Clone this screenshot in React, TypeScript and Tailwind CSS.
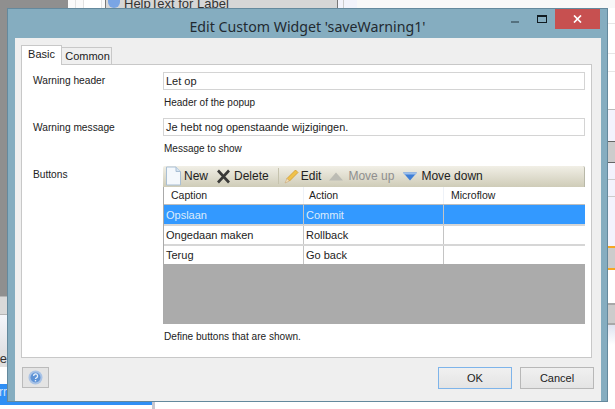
import React from "react";

const rows = [
  { caption: "Opslaan", action: "Commit", selected: true, last: false },
  { caption: "Ongedaan maken", action: "Rollback", selected: false, last: false },
  { caption: "Terug", action: "Go back", selected: false, last: true },
];

function NewIcon() {
  return (
    <svg width="17" height="20" viewBox="0 0 17 20">
      <path d="M1.5 1h9.5l4.5 4.5V19h-14z" fill="#f4f8fc" stroke="#a9bfd4" />
      <path d="M11 1v4.5h4.5" fill="#d5e3f0" stroke="#a9bfd4" />
    </svg>
  );
}

function DeleteIcon() {
  return (
    <svg width="15" height="15" viewBox="0 0 15 15">
      <path d="M2 1.5l11 12M13 1.5l-11 12" stroke="#3a3a38" strokeWidth="2.6" />
    </svg>
  );
}

function EditIcon() {
  return (
    <svg width="17" height="17" viewBox="0 0 17 17">
      <path d="M4 10.5L12.5 2l2.5 2.5L6.5 13z" fill="#f0c24a" stroke="#d19a30" strokeWidth="0.8" />
      <path d="M4 10.5L6.5 13 2 15z" fill="#f3dfb8" stroke="#c9a878" strokeWidth="0.6" />
    </svg>
  );
}

function Triangle({ down }: { down?: boolean }) {
  return down ? (
    <svg width="14" height="9" viewBox="0 0 14 9">
      <path d="M0 0.5h14L7 8.5z" fill="#3f7fd6" />
      <path d="M0 0.5h14L12.5 2.5h-11z" fill="#9cc0ec" />
    </svg>
  ) : (
    <svg width="14" height="9" viewBox="0 0 14 9">
      <path d="M7 0.5L14 8.5H0z" fill="#bcbcb4" />
    </svg>
  );
}

function HelpIcon() {
  return (
    <svg width="15" height="15" viewBox="0 0 15 15">
      <circle cx="7.5" cy="7.5" r="7" fill="#a9c3e6" />
      <circle cx="7.5" cy="7.5" r="5" fill="#5f93d6" />
      <path d="M5.6 6a2 2 0 1 1 2.8 1.8c-.6.3-.9.6-.9 1.2" fill="none" stroke="#e6f0fb" strokeWidth="1.3" />
      <rect x="6.8" y="10" width="1.4" height="1.4" fill="#e6f0fb" />
    </svg>
  );
}

function Background() {
  return (
    <div className="flex h-[409px] w-[615px] flex-col overflow-hidden bg-white">
      <div className="flex h-[8px] shrink-0 overflow-hidden">
        <div className="w-[68px] bg-[#8f8f8f]" />
        <div className="flex w-[37px] bg-[#fafafa]">
          <div className="w-[8px] border-r border-[#e2e2e2]" />
          <div className="w-[8px] border-r border-[#e2e2e2]" />
          <div className="w-[18px] border-r border-[#e2e2e2] bg-white" />
        </div>
        <div className="flex w-[233px] items-end gap-1 border-x border-[#777] bg-[#d6d6d6] pl-[2px] text-[13px] leading-[8px] text-[#333]">
          <span className="size-[8px] w-[12px] shrink-0 rounded-b-full bg-[#7aa5e4]" />
          <span className="whitespace-nowrap">HelpText for Label</span>
        </div>
        <div className="flex w-[19px] bg-[#f2f3fb]">
          <div className="w-[6px] border-r border-[#ccc]" />
        </div>
        <div className="flex-1 bg-[#f8f8f8]" />
      </div>
      <div className="flex flex-1">
        <div className="flex w-[7px] flex-col">
          <div className="h-[288px] bg-[#8f8f8f]" />
          <div className="h-[19px] border-y border-[#b5b5b5] bg-[#d9d9d9]" />
          <div className="h-[35px] bg-gradient-to-b from-[#f4f6fb] to-[#e2e3e6]" />
          <div className="flex h-[17px] justify-end overflow-hidden bg-[#e0e0e0] text-[13px] leading-[17px] text-[#333]">
            <span>re</span>
          </div>
          <div className="h-[17px] bg-white" />
          <div className="flex flex-1 justify-end overflow-hidden bg-[#2f8ff5] text-[12px] leading-[16px] text-[#cfe4fb]">
            <span>rr</span>
          </div>
        </div>
        <div className="flex-1" />
        <div className="flex w-[7px] flex-col bg-white">
          <div className="h-[16px] border-b border-[#e6e6e6]" />
          <div className="h-[30px] border-b border-[#e6e6e6]" />
          <div className="h-[18px] border-b border-[#e6e6e6]" />
          <div className="h-[38px] border-b border-[#bbb]" />
          <div className="h-[31px] bg-[#f3f3fd]" />
          <div className="h-[22px] border-y border-[#666] bg-[#cccccc]" />
          <div className="h-[17px] border-b border-[#ccc] bg-[#f3f3fd]" />
          <div className="h-[17px] border-b border-[#ccc] bg-[#f3f3fd]" />
          <div className="h-[49px] bg-[#f3f3fd]" />
          <div className="h-[24px] border-y-2 border-[#f5a623] bg-[#cccccc]" />
          <div className="h-[33px] bg-white" />
          <div className="h-[22px] border-y-2 border-[#a8a8a8] bg-[#cccccc]" />
          <div className="h-[20px] bg-gradient-to-b from-[#dfe3f0] to-white" />
        </div>
      </div>
      <div className="flex h-[7px] w-[155px] shrink-0">
        <div className="h-[3px] flex-1 bg-[#2f8ff5]" />
        <div className="h-[7px] w-[3px] bg-[#c8c8d0]" />
      </div>
    </div>
  );
}

export default function App() {
  return (
    <div className="relative h-[409px] w-[615px] overflow-hidden font-['Liberation_Sans',sans-serif] text-[11px] text-[#222]">
      <Background />
      <div className="absolute left-[7px] top-[8px] flex h-[394px] w-[601px] flex-col border border-[#64899d] bg-[#85adc0]">
        <div className="relative flex h-[29px] shrink-0 items-center justify-center">
          <span className="mt-[7px] font-['Noto_Sans',sans-serif] text-[14.2px] leading-[20px] text-[#222a30]">
            Edit Custom Widget 'saveWarning1'
          </span>
          <div className="absolute right-[7px] top-0 flex h-[20px] items-start">
            <span className="mr-[18px] mt-[12px] h-[2px] w-[8px] bg-[#55717f]" />
            <span className="mr-[8px] mt-[6px] h-[8px] w-[10px] border border-t-2 border-[#111c22]" />
            <div className="flex h-[20px] w-[45px] items-center justify-center bg-[#c75050]">
              <svg width="9" height="8" viewBox="0 0 9 8">
                <path d="M1 0.5l7 7M8 0.5l-7 7" stroke="#fff" strokeWidth="1.7" />
              </svg>
            </div>
          </div>
        </div>
        <div className="ml-[7px] mr-[6px] flex flex-1 flex-col bg-[#efefef] pl-[6px] pr-[9px] pt-[7px]">
          <div className="flex h-[19px] shrink-0 items-end">
            <div className="z-10 -mb-px flex h-[20px] w-[41px] items-center justify-center border border-b-0 border-[#c8c8c8] bg-white pb-[2px] text-[11px]">
              Basic
            </div>
            <div className="flex h-[17px] w-[50px] items-center justify-center border border-b-0 border-l-0 border-[#c8c8c8] bg-[#efefef] pl-[2px] text-[11px]">
              Common
            </div>
          </div>
          <div className="grid h-[294px] grid-cols-[130px_422px] content-start border border-[#c8c8c8] bg-white pl-[11px] pt-[7px]">
            <div className="pt-[2px] text-[10.2px] leading-[14px]">Warning header</div>
            <div>
              <div className="flex h-[18px] items-center border border-[#d4d4d4] pl-[2px] leading-[14px]">Let op</div>
              <div className="mt-[6px] h-[22px] pl-[1px] text-[10px] leading-[14px]">Header of the popup</div>
            </div>
            <div className="pt-[3px] text-[10.2px] leading-[14px]">Warning message</div>
            <div>
              <div className="flex h-[18px] items-center border border-[#d4d4d4] pl-[2px] text-[10.9px] leading-[14px]">
                Je hebt nog openstaande wijzigingen.
              </div>
              <div className="mt-[6px] h-[24px] pl-[1px] text-[10px] leading-[14px]">Message to show</div>
            </div>
            <div className="pt-[2px] text-[10.2px] leading-[14px]">Buttons</div>
            <div>
              <div className="flex h-[21px] items-center rounded-t-[2px] border-r border-[#b8b8a8] bg-gradient-to-b from-[#f1efe6] to-[#cfccb8] pb-[1px] pl-[2px] text-[12px] leading-[14px]">
                <NewIcon />
                <span className="ml-[2px]">New</span>
                <span className="ml-[8px]"><DeleteIcon /></span>
                <span className="ml-[3px]">Delete</span>
                <span className="ml-[9px] mr-[4px] h-[16px] w-px bg-[#c6c3ae]" />
                <EditIcon />
                <span className="ml-[1px]">Edit</span>
                <span className="ml-[8px]"><Triangle /></span>
                <span className="ml-[5px] text-[#8f8f8f]">Move up</span>
                <span className="ml-[9px]"><Triangle down /></span>
                <span className="ml-[4px]">Move down</span>
              </div>
              <div className="flex h-[137px] flex-col border-l border-[#aaa] bg-[#ababab]">
                <div className="grid h-[18px] shrink-0 grid-cols-[140px_140px_1fr] border-b border-[#bdbdbd] bg-white text-[10.5px] leading-[16px]">
                  <div className="border-r border-[#eef2f8] pl-[7px]">Caption</div>
                  <div className="border-r border-[#eef2f8] pl-[5px]">Action</div>
                  <div className="pl-[7px]">Microflow</div>
                </div>
                {rows.map((row) => (
                  <div
                    key={row.caption}
                    className={`grid shrink-0 grid-cols-[140px_140px_1fr] ${
                      row.last ? "h-[18px]" : "border-b-2 border-[#d6d6d6]"
                    } ${
                      row.selected
                        ? "h-[21px] bg-[#3399ff] leading-[20px] text-[#dcebfb]"
                        : "bg-white leading-[18px] text-[#222]"
                    } ${!row.selected && !row.last ? "h-[20px]" : ""}`}
                  >
                    <div className="border-r border-[#c4c4c4] pl-[2px]">{row.caption}</div>
                    <div className="border-r border-[#c4c4c4] pl-[2px]">{row.action}</div>
                    <div />
                  </div>
                ))}
              </div>
              <div className="mt-[6px] pl-[1px] text-[10.1px] leading-[14px]">Define buttons that are shown.</div>
            </div>
          </div>
          <div className="mt-[9px] flex items-start">
            <button className="ml-px flex h-[21px] w-[27px] items-center justify-center border border-[#bbb] bg-[#e4e4e4]">
              <HelpIcon />
            </button>
            <button className="ml-auto h-[22px] w-[74px] border border-[#7eb4ea] bg-gradient-to-b from-[#f0f0f0] to-[#e4e4e4] text-[11px]">
              OK
            </button>
            <button className="ml-[8px] mr-[-2px] h-[22px] w-[74px] border border-[#b8b8b8] bg-gradient-to-b from-[#f0f0f0] to-[#e4e4e4] text-[11px]">
              Cancel
            </button>
          </div>
        </div>
      </div>
    </div>
  );
}
